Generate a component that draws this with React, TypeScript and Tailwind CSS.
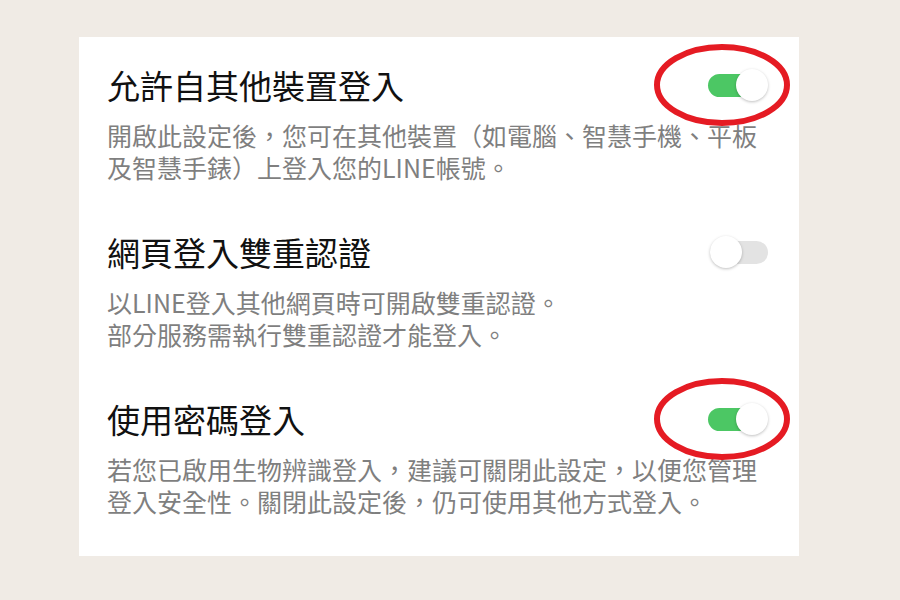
import React from 'react'

function Toggle({ on }: { on: boolean }) {
  return (
    <div className="relative w-[60px] h-[32px] flex items-center">
      <div
        className={
          on
            ? 'ml-[0px] w-[58px] h-[23px] rounded-full bg-[#4cc764]'
            : 'ml-[2px] w-[58px] h-[23px] rounded-full bg-[#e3e3e3]'
        }
      />
      <div
        className={
          on
            ? 'absolute right-[0px] top-[0px] w-[32px] h-[32px] rounded-full bg-white shadow-[0_1px_3px_rgba(0,0,0,0.25)]'
            : 'absolute left-[2px] top-[0px] w-[32px] h-[32px] rounded-full bg-white shadow-[0_1px_3px_rgba(0,0,0,0.25)]'
        }
      />
    </div>
  )
}

function Ellipse({ className }: { className: string }) {
  return (
    <svg className={className} width="140" height="86" viewBox="0 0 140 86">
      <ellipse cx="70" cy="43" rx="65" ry="38" fill="none" stroke="#e51b23" strokeWidth="6" />
    </svg>
  )
}

function Setting({
  title,
  lines,
  on,
  circled,
}: {
  title: string
  lines: string[]
  on: boolean
  circled: boolean
}) {
  return (
    <div className="relative">
      <div className="flex items-center justify-between h-[40px]">
        <div className="text-[33px] leading-[40px] text-[#111111]">{title}</div>
        <Toggle on={on} />
      </div>
      <div className="mt-[14px] text-[25px] leading-[32px] text-[#7f7f7f]">
        {lines.map((l) => (
          <div key={l}>{l}</div>
        ))}
      </div>
      {circled && <Ellipse className="absolute right-[-24px] top-[-23px]" />}
    </div>
  )
}

export default function App() {
  return (
    <div
      className="w-[900px] h-[600px] bg-[#f0ebe5] pt-[37px] pl-[79px]"
      style={{ fontFamily: '"Noto Sans CJK TC", "Noto Sans", sans-serif' }}
    >
      <div className="w-[720px] h-[519px] bg-white pt-[28px] pl-[28px] pr-[31px] flex flex-col">
        <Setting
          title="允許自其他裝置登入"
          lines={[
            '開啟此設定後，您可在其他裝置（如電腦、智慧手機、平板',
            '及智慧手錶）上登入您的LINE帳號。',
          ]}
          on
          circled
        />
        <div className="mt-[49px]">
          <Setting
            title="網頁登入雙重認證"
            lines={['以LINE登入其他網頁時可開啟雙重認證。', '部分服務需執行雙重認證才能登入。']}
            on={false}
            circled={false}
          />
        </div>
        <div className="mt-[49px]">
          <Setting
            title="使用密碼登入"
            lines={[
              '若您已啟用生物辨識登入，建議可關閉此設定，以便您管理',
              '登入安全性。關閉此設定後，仍可使用其他方式登入。',
            ]}
            on
            circled
          />
        </div>
      </div>
    </div>
  )
}
